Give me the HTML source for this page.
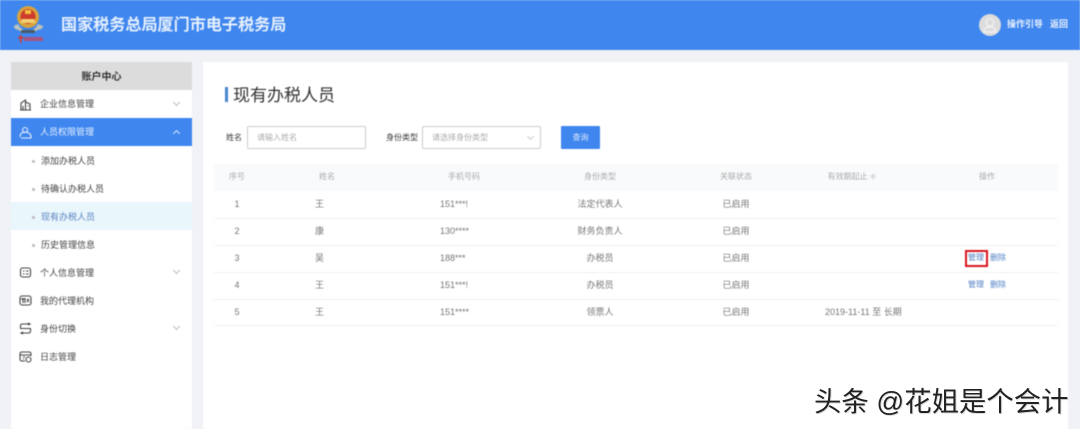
<!DOCTYPE html>
<html lang="zh"><head><meta charset="utf-8"><title>现有办税人员</title>
<style>
*{box-sizing:border-box}
html,body{margin:0;padding:0}
body{width:1080px;height:429px;overflow:hidden;position:relative;background:#f1f2f5;font-family:"Liberation Sans","Noto Sans CJK SC",sans-serif;color:#555}
.a{position:absolute;white-space:nowrap}
.t{position:absolute;white-space:nowrap;font-size:9px;line-height:12px;transform:translateX(-50%);color:#777}
.l{position:absolute;white-space:nowrap;font-size:9px;line-height:12px;color:#777}
.m{position:absolute;left:11px;width:181px;height:28px;line-height:28px;font-size:9px;color:#444}
.m span{position:absolute;left:29px}
.d span{top:1px}
.s span{left:30px;top:1px}
.s:before{content:"";position:absolute;left:21px;top:14px;width:3px;height:3px;border-radius:50%;background:#bbb}
.c{position:absolute;right:13px;top:11px;width:5px;height:5px;border-right:1px solid #bbb;border-bottom:1px solid #bbb;transform:rotate(45deg)}
.ln{position:absolute;left:214px;width:844px;height:1px;background:#f0f1f3}
svg.i{position:absolute;left:8px;top:8px;width:13px;height:13px;fill:none;stroke:#444;stroke-width:1.1}
.blur{position:absolute;left:0;top:0;width:1080px;height:429px;filter:blur(.45px)}
</style></head><body><div class="blur">
<div class="a" style="left:0;top:0;width:1080px;height:50px;background:#3f86ee"></div>
<svg class="a" style="left:0;top:0" width="60" height="50" viewBox="0 0 60 50">
<path d="M17 24c2 4 6 7 11 7s9-3 11-7l6 2c-1 3-4 4-7 4l-3 3H21l-3-3c-3 0-5-1-6-4z" fill="#b8c2bc" transform="translate(2.800 0) scale(.9 1)"/>
<circle cx="28" cy="17" r="11" fill="#d9a33c"/><circle cx="28" cy="16.500" r="7.500" fill="#cf3b2c"/>
<path d="M25 10h6v4h-6z" fill="#f0c040"/><path d="M22 19h12l1.500 4h-15z" fill="#f0d070"/>
<path d="M21 30h14v3H21z" fill="#4b5a66"/>
<rect x="20" y="35" width="1.500" height="8" fill="#d8322a"/><rect x="18" y="37" width="5.500" height="1.500" fill="#d8322a"/>
<rect x="24" y="37" width="19" height="4" fill="#c9435c" opacity=".75"/>
</svg>
<div class="a" style="left:61px;top:15px;font-size:16.100px;line-height:20px;font-weight:700;color:#e6f0fe">国家税务总局厦门市电子税务局</div>
<svg class="a" style="left:979px;top:14px" width="22" height="22" viewBox="0 0 22 22"><circle cx="11" cy="11" r="11" fill="#dcdcdc"/><circle cx="11" cy="8.500" r="3.700" fill="none" stroke="#f4f4f4" stroke-width="1.200"/><path d="M5 18c0-7 12-7 12 0z" fill="none" stroke="#f4f4f4" stroke-width="1.200"/></svg>
<div class="a" style="left:1007px;top:18px;font-size:9px;line-height:13px;font-weight:700;color:#e8f1fe">操作引导</div>
<div class="a" style="left:1050px;top:18px;font-size:9px;line-height:13px;font-weight:700;color:#e8f1fe">返回</div>

<div class="a" style="left:11px;top:62px;width:181px;height:367px;background:#fff"></div>
<div class="a" style="left:11px;top:62px;width:181px;height:28px;background:#dcdcdc;text-align:center;line-height:29px;font-size:10px;font-weight:700;color:#333;padding-top:1px">账户中心</div>
<div class="m" style="top:90px"><svg class="i" viewBox="0 0 13 13"><path d="M1 12h11M2 12V5l4.500-3v10M6.500 4L11 6v6M4 12V8M8.500 8h1"/></svg><span>企业信息管理</span><i class="c" style="top:10px"></i></div>
<div class="m" style="top:118px;background:#3f86ee;color:#e6f0fe"><svg class="i" viewBox="0 0 13 13" style="stroke:#e6f0fe"><circle cx="6" cy="4" r="2.500"/><path d="M1 11c0-7 10-6 11-1v2H2"/></svg><span>人员权限管理</span><i class="c" style="top:13px;transform:rotate(225deg);border-color:#dbe8fc"></i></div>
<div class="m s" style="top:146px"><span>添加办税人员</span></div>
<div class="m s" style="top:174px"><span>待确认办税人员</span></div>
<div class="m s" style="top:202px;background:#e9f6fc;color:#5b85c0"><span>现有办税人员</span></div>
<div class="m s" style="top:230px"><span>历史管理信息</span></div>
<div class="m d" style="top:258px"><svg class="i" viewBox="0 0 13 13"><rect x="1.500" y="2" width="10" height="9" rx="2"/><path d="M4 5h1.500M7 5h2.500M4 8h1.500M7 8h2.500"/></svg><span>个人信息管理</span><i class="c" style="top:10px"></i></div>
<div class="m d" style="top:286px"><svg class="i" viewBox="0 0 13 13"><rect x="1" y="2" width="11" height="9" rx="2"/><path d="M4 4v5M6 4v5M8 5l2 3M10 5L8 8M2 5h4"/></svg><span>我的代理机构</span></div>
<div class="m d" style="top:314px"><svg class="i" viewBox="0 0 13 13"><path d="M1.500 6V4q0-2 2-2h7M11.500 7v2q0 2-2 2h-7M1 6.500h11M9 1l2 1-2 1M4 10l-2 1 2 1"/></svg><span>身份切换</span><i class="c" style="top:10px"></i></div>
<div class="m d" style="top:342px"><svg class="i" viewBox="0 0 13 13"><path d="M6 11H3q-2 0-2-2V4q0-2 2-2h7q2 0 2 2v2M1 5h11M4 7h2M4 9h1"/><circle cx="9.500" cy="9.500" r="2.500"/></svg><span>日志管理</span></div>

<div class="a" style="left:203px;top:62px;width:865px;height:367px;background:#fff"></div>
<div class="a" style="left:225px;top:87px;width:3px;height:15px;background:#4a86d0"></div>
<div class="a" style="left:233px;top:84px;font-size:17px;line-height:24px;color:#333">现有办税人员</div>

<div class="l" style="left:226px;top:132px;font-size:8px;color:#333">姓名</div>
<div class="a" style="left:247px;top:126px;width:119px;height:23px;border:1px solid #c8ccd2;border-radius:2px"></div>
<div class="l" style="left:257px;top:132px;font-size:8px;color:#aaa">请输入姓名</div>
<div class="l" style="left:386px;top:132px;font-size:8px;color:#333">身份类型</div>
<div class="a" style="left:422px;top:126px;width:119px;height:23px;border:1px solid #c8ccd2;border-radius:2px"></div>
<div class="l" style="left:432px;top:132px;font-size:8px;color:#aaa">请选择身份类型</div>
<i class="a" style="left:528px;top:134px;width:5px;height:5px;border-right:1px solid #ccc;border-bottom:1px solid #ccc;transform:rotate(45deg)"></i>
<div class="a" style="left:561px;top:126px;width:39px;height:23px;background:#3f86ee;border-radius:1px;color:#dce9fc;font-size:8px;line-height:23px;text-align:center">查询</div>

<div class="a" style="left:214px;top:164px;width:844px;height:27px;background:#f9fafb"></div>
<div class="t" style="left:237px;top:171px;color:#aaa;font-size:8px">序号</div>
<div class="t" style="left:327px;top:171px;color:#aaa;font-size:8px">姓名</div>
<div class="t" style="left:464px;top:171px;color:#aaa;font-size:8px">手机号码</div>
<div class="t" style="left:600px;top:171px;color:#aaa;font-size:8px">身份类型</div>
<div class="t" style="left:736px;top:171px;color:#aaa;font-size:8px">关联状态</div>
<div class="t" style="left:852px;top:171px;color:#aaa;font-size:8px">有效期起止 ≑</div>
<div class="t" style="left:987px;top:171px;color:#aaa;font-size:8px">操作</div>

<div class="ln" style="top:218px"></div><div class="ln" style="top:245px"></div><div class="ln" style="top:272px"></div><div class="ln" style="top:299px"></div><div class="ln" style="top:325px"></div>

<div class="t" style="left:237px;top:198px">1</div><div class="l" style="left:315px;top:198px">王</div><div class="l" style="left:440px;top:198px">151***!</div><div class="t" style="left:600px;top:198px">法定代表人</div><div class="t" style="left:736px;top:198px">已启用</div>
<div class="t" style="left:237px;top:225px">2</div><div class="l" style="left:315px;top:225px">康</div><div class="l" style="left:440px;top:225px">130****</div><div class="t" style="left:600px;top:225px">财务负责人</div><div class="t" style="left:736px;top:225px">已启用</div>
<div class="t" style="left:237px;top:252px">3</div><div class="l" style="left:315px;top:252px">吴</div><div class="l" style="left:440px;top:252px">188***</div><div class="t" style="left:600px;top:252px">办税员</div><div class="t" style="left:736px;top:252px">已启用</div>
<div class="t" style="left:237px;top:279px">4</div><div class="l" style="left:315px;top:279px">王</div><div class="l" style="left:440px;top:279px">151***!</div><div class="t" style="left:600px;top:279px">办税员</div><div class="t" style="left:736px;top:279px">已启用</div>
<div class="t" style="left:237px;top:306px">5</div><div class="l" style="left:315px;top:306px">王</div><div class="l" style="left:440px;top:306px">151****</div><div class="t" style="left:600px;top:306px">领票人</div><div class="t" style="left:736px;top:306px">已启用</div>
<div class="l" style="left:825px;top:306px">2019-11-11 至 长期</div>

<div class="a" style="left:965px;top:250px;width:23px;height:17px;border:2px solid #d9141e"></div>
<div class="l" style="left:968px;top:252px;font-size:8px;color:#4f7fc4">管理</div><div class="l" style="left:990px;top:252px;font-size:8px;color:#4f7fc4">删除</div>
<div class="l" style="left:968px;top:279px;font-size:8px;color:#4f7fc4">管理</div><div class="l" style="left:990px;top:279px;font-size:8px;color:#4f7fc4">删除</div>
</div>
<div class="a" style="left:814px;top:386px;font-size:27.400px;line-height:32px;color:#222;text-shadow:1px 1px 0 #ddd">头条 @花姐是个会计</div>
</body></html>
